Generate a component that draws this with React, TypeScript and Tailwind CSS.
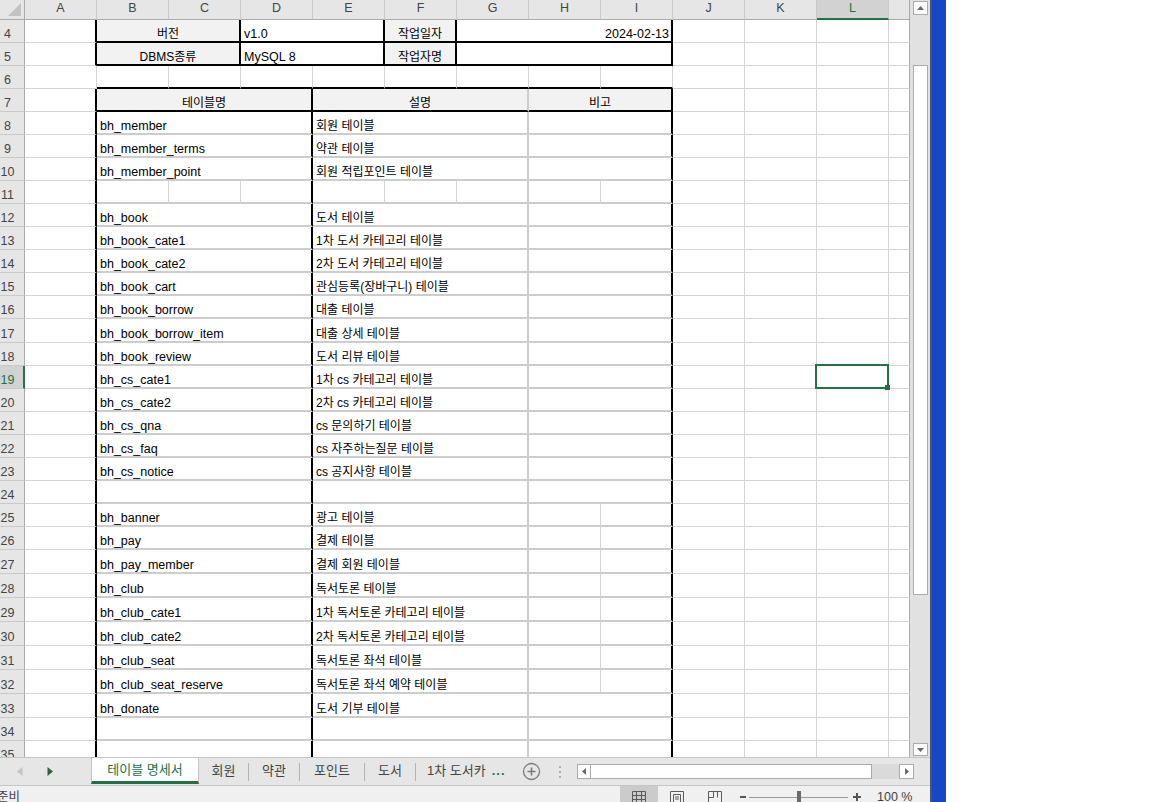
import React from "react";

type Edge = "g" | "k" | "t" | "e";

// right / bottom edge styles of a cell
const RIGHT: Record<Edge, string> = {
  g: "border-r border-r-[#d4d4d4]",
  k: "border-r-2 border-r-black",
  t: "border-r-2 border-r-[#cdcdcd]",
  e: "border-r border-r-[#a8a8a8]",
};
const BOTTOM: Record<Edge, string> = {
  g: "border-b border-b-[#d4d4d4]",
  k: "border-b-2 border-b-black",
  t: "border-b-2 border-b-[#cdcdcd]",
  e: "border-b border-b-[#a8a8a8]",
};
const SPAN = { 1: "col-span-1", 2: "col-span-2", 3: "col-span-3" };
const ALIGN = {
  l: "justify-start pl-[3px]",
  c: "justify-center",
  r: "justify-end pr-[2px]",
};

type Cell = {
  span?: 1 | 2 | 3;
  text?: string;
  align?: "l" | "c" | "r";
  r?: Edge;
  b?: Edge;
  fill?: boolean;
  lat?: boolean;
  sel?: boolean;
};

const COLS = ["A", "B", "C", "D", "E", "F", "G", "H", "I", "J", "K", "L"];

const tail = (sel = false): Cell[] => [{}, {}, { sel }, { r: "e" }];

const BODY: [number, string, string, "m" | "s" | "x"][] = [
  [8, "bh_member", "회원 테이블", "m"],
  [9, "bh_member_terms", "약관 테이블", "m"],
  [10, "bh_member_point", "회원 적립포인트 테이블", "m"],
  [11, "", "", "x"],
  [12, "bh_book", "도서 테이블", "m"],
  [13, "bh_book_cate1", "1차 도서 카테고리 테이블", "m"],
  [14, "bh_book_cate2", "2차 도서 카테고리 테이블", "m"],
  [15, "bh_book_cart", "관심등록(장바구니) 테이블", "m"],
  [16, "bh_book_borrow", "대출 테이블", "m"],
  [17, "bh_book_borrow_item", "대출 상세 테이블", "m"],
  [18, "bh_book_review", "도서 리뷰 테이블", "m"],
  [19, "bh_cs_cate1", "1차 cs 카테고리 테이블", "m"],
  [20, "bh_cs_cate2", "2차 cs 카테고리 테이블", "m"],
  [21, "bh_cs_qna", "cs 문의하기 테이블", "m"],
  [22, "bh_cs_faq", "cs 자주하는질문 테이블", "m"],
  [23, "bh_cs_notice", "cs 공지사항 테이블", "m"],
  [24, "", "", "m"],
  [25, "bh_banner", "광고 테이블", "s"],
  [26, "bh_pay", "결제 테이블", "s"],
  [27, "bh_pay_member", "결제 회원 테이블", "s"],
  [28, "bh_club", "독서토론 테이블", "s"],
  [29, "bh_club_cate1", "1차 독서토론 카테고리 테이블", "s"],
  [30, "bh_club_cate2", "2차 독서토론 카테고리 테이블", "s"],
  [31, "bh_club_seat", "독서토론 좌석 테이블", "s"],
  [32, "bh_club_seat_reserve", "독서토론 좌석 예약 테이블", "s"],
  [33, "bh_donate", "도서 기부 테이블", "m"],
  [34, "", "", "m"],
  [35, "", "", "m"],
];

const TALL = [17, 27, 28, 29, 30, 31, 32, 33];

function bodyCells(n: number, name: string, desc: string, kind: "m" | "s" | "x"): Cell[] {
  if (kind === "x") {
    return [
      { r: "k" },
      { b: "t" },
      { b: "t" },
      { r: "k", b: "t" },
      { b: "t" },
      { b: "t" },
      { r: "t", b: "t" },
      { b: "t" },
      { r: "k", b: "t" },
      ...tail(),
    ];
  }
  const hi: Cell[] = kind === "s" ? [{ b: "t" }, { r: "k", b: "t" }] : [{ span: 2, r: "k", b: "t" }];
  return [
    { r: "k" },
    { span: 3, text: name, lat: true, r: "k", b: "t" },
    { span: 3, text: desc, r: "t", b: "t" },
    ...hi,
    ...tail(n === 19),
  ];
}

const TOP_ROWS: [number, Cell[]][] = [
  [
    4,
    [
      { r: "k" },
      { span: 2, text: "버전", align: "c", r: "k", b: "k", fill: true },
      { span: 2, text: "v1.0", lat: true, r: "k", b: "k" },
      { text: "작업일자", align: "c", r: "k", b: "k", fill: true },
      { span: 3, text: "2024-02-13", align: "r", lat: true, r: "k", b: "k" },
      ...tail(),
    ],
  ],
  [
    5,
    [
      { r: "k" },
      { span: 2, text: "DBMS종류", align: "c", r: "k", b: "k", fill: true },
      { span: 2, text: "MySQL 8", lat: true, r: "k", b: "k" },
      { text: "작업자명", align: "c", r: "k", b: "k", fill: true },
      { span: 3, r: "k", b: "k" },
      ...tail(),
    ],
  ],
  [6, [{}, { b: "k" }, { b: "k" }, { b: "k" }, { b: "k" }, { b: "k" }, { b: "k" }, { b: "k" }, { b: "k" }, ...tail()]],
  [
    7,
    [
      { r: "k" },
      { span: 3, text: "테이블명", align: "c", r: "k", b: "k", fill: true },
      { span: 3, text: "설명", align: "c", r: "t", b: "k", fill: true },
      { span: 2, text: "비고", align: "c", r: "k", b: "k", fill: true },
      ...tail(),
    ],
  ],
];

function SheetCell({ c }: { c: Cell }) {
  const cls = [
    "flex min-w-0 items-end whitespace-nowrap pb-[1px] leading-[12px] text-black",
    SPAN[c.span ?? 1],
    RIGHT[c.r ?? "g"],
    BOTTOM[c.b ?? "g"],
    ALIGN[c.align ?? "l"],
    c.fill ? "bg-[#f2f2f2]" : "bg-white",
    c.lat ? "text-[12.5px]" : "text-[12px]",
    c.sel ? "relative" : "",
  ].join(" ");
  return (
    <div className={cls}>
      {c.text}
      {c.sel && (
        <>
          <div className="absolute -top-[2px] -left-[2px] -right-[1px] -bottom-[1px] z-10 border-2 border-[#217346]" />
          <div className="absolute -right-[2px] -bottom-[2px] z-20 h-[5px] w-[5px] bg-[#217346]" />
        </>
      )}
    </div>
  );
}

function SheetRow({ n, cells }: { n: number; cells: Cell[] }) {
  const h = TALL.includes(n) ? "h-[24px]" : "h-[23px]";
  const sel = n === 19;
  return (
    <div className={`grid shrink-0 grid-cols-[25px_repeat(12,72px)_21px] ${h}`}>
      <div
        className={`flex items-end border-b border-b-[#c9c9c9] pb-[2px] leading-[12px] ${
          sel
            ? "border-r-2 border-r-[#217346] bg-[#d2d2d2] text-[#217346]"
            : "border-r border-r-[#ababab] bg-[#e6e6e6] text-[#444]"
        }`}
      >
        <span className="w-[15px] text-center text-[12.5px]">{n}</span>
      </div>
      {cells.map((c, i) => (
        <SheetCell key={i} c={c} />
      ))}
    </div>
  );
}

function HeaderRow() {
  return (
    <div className="grid h-[20px] shrink-0 grid-cols-[25px_repeat(12,72px)_21px] bg-[#e6e6e6] text-[12.5px] leading-[14px] text-[#444]">
      <div className="flex items-end justify-end border-r border-b border-r-[#ababab] border-b-[#ababab] pr-[2px] pb-[2px]">
        <svg width="16" height="15" viewBox="0 0 16 15">
          <path d="M15 1 L15 14 L2 14 Z" fill="#c2c2c2" />
        </svg>
      </div>
      {COLS.map((c) => (
        <div
          key={c}
          className={`flex justify-center border-r border-r-[#c9c9c9] pt-[1px] ${
            c === "L"
              ? "border-b-2 border-b-[#217346] bg-[#d2d2d2] text-[#217346]"
              : "border-b border-b-[#ababab]"
          }`}
        >
          {c}
        </div>
      ))}
      <div className="border-r border-b border-r-[#a8a8a8] border-b-[#ababab]" />
    </div>
  );
}

function VScroll() {
  return (
    <div className="flex w-[20px] flex-col bg-[#e1e1e1] pl-[3px] pr-[2px]">
      <div className="mt-[1px] flex h-[14px] items-center justify-center border border-[#ababab] bg-white">
        <svg width="7" height="4" viewBox="0 0 7 4">
          <path d="M0 4 L3.5 0 L7 4 Z" fill="#6a6a6a" />
        </svg>
      </div>
      <div className="mt-[50px] h-[530px] border border-[#ababab] bg-white" />
      <div className="mt-auto mb-[1px] flex h-[13px] items-center justify-center border border-[#ababab] bg-white">
        <svg width="7" height="4" viewBox="0 0 7 4">
          <path d="M0 0 L7 0 L3.5 4 Z" fill="#6a6a6a" />
        </svg>
      </div>
    </div>
  );
}

const TABS: [string, string][] = [
  ["회원", "w-[49px]"],
  ["약관", "w-[50px]"],
  ["포인트", "w-[64px]"],
  ["도서", "w-[50px]"],
];

function TabBar() {
  return (
    <div className="flex h-[29px] shrink-0 border-t border-b border-t-[#c6c6c6] border-b-[#c6c6c6] bg-[#e6e6e6] text-[13px] text-[#444]">
      <div className="flex w-[91px] items-center pl-[17px]">
        <svg width="6" height="9" viewBox="0 0 6 9">
          <path d="M5.5 0 L0 4.5 L5.5 9 Z" fill="#c4c4c4" />
        </svg>
        <svg className="ml-[24px]" width="6" height="9" viewBox="0 0 6 9">
          <path d="M0.5 0 L6 4.5 L0.5 9 Z" fill="#1e6b43" />
        </svg>
      </div>
      <div className="flex h-[26px] w-[108px] items-center justify-center border-x border-b-[3px] border-x-[#c6c6c6] border-b-[#217346] bg-white pt-[1px] text-[#217346]">
        테이블 명세서
      </div>
      {TABS.map(([t, w]) => (
        <div key={t} className="flex items-center">
          <div className={`flex h-full items-center justify-center pb-[2px] ${w}`}>{t}</div>
          <div className="h-[18px] w-px bg-[#b4b4b4]" />
        </div>
      ))}
      <div className="flex w-[98px] items-center pb-[2px] pl-[11px]">
        1차 도서카
        <span className="ml-[6px] font-bold tracking-[1px] text-[#217346]">...</span>
      </div>
      <div className="flex w-[34px] items-center justify-center">
        <svg width="19" height="19" viewBox="0 0 19 19">
          <circle cx="9.5" cy="9.5" r="8" fill="none" stroke="#7a7a7a" strokeWidth="1.3" />
          <path d="M9.5 5.5 V13.5 M5.5 9.5 H13.5" stroke="#7a7a7a" strokeWidth="1.6" />
        </svg>
      </div>
      <div className="flex w-[24px] flex-col items-center justify-center gap-[3px]">
        <div className="h-[2px] w-[2px] bg-[#b0b0b0]" />
        <div className="h-[2px] w-[2px] bg-[#b0b0b0]" />
        <div className="h-[2px] w-[2px] bg-[#b0b0b0]" />
      </div>
      <div className="ml-[5px] flex w-[337px] items-center">
        <div className="flex h-[15px] w-full">
          <div className="flex w-[14px] items-center justify-center border border-[#ababab] bg-white">
            <svg width="4" height="7" viewBox="0 0 4 7">
              <path d="M4 0 L0 3.5 L4 7 Z" fill="#6a6a6a" />
            </svg>
          </div>
          <div className="w-[281px] border-y border-r border-[#ababab] bg-white" />
          <div className="flex-1 bg-[#dadada]" />
          <div className="flex w-[15px] items-center justify-center border border-[#ababab] bg-white">
            <svg width="4" height="7" viewBox="0 0 4 7">
              <path d="M0 0 L4 3.5 L0 7 Z" fill="#6a6a6a" />
            </svg>
          </div>
        </div>
      </div>
    </div>
  );
}

function StatusBar() {
  return (
    <div className="flex h-[22px] shrink-0 items-center bg-[#f0f0f0] text-[12.5px] text-[#444]">
      <span className="-ml-[3px] w-[623px]">준비</span>
      <div className="flex h-full w-[38px] items-center justify-center bg-[#cbcbcb]">
        <svg width="14" height="13" viewBox="0 0 14 13">
          <path
            d="M0.5 0.5 H13.5 V12.5 H0.5 Z M0.5 4.5 H13.5 M0.5 8.5 H13.5 M4.5 0.5 V12.5 M9.5 0.5 V12.5"
            fill="none"
            stroke="#5a5a5a"
          />
        </svg>
      </div>
      <div className="flex h-full w-[38px] items-center justify-center">
        <svg width="14" height="13" viewBox="0 0 14 13">
          <path d="M0.5 0.5 H13.5 V12.5 H0.5 Z M3.5 3.5 H10.5 V12.5 M3.5 3.5 V12.5 M5 6 H9 M5 8 H9" fill="none" stroke="#5a5a5a" />
        </svg>
      </div>
      <div className="flex h-full w-[38px] items-center justify-center">
        <svg width="14" height="13" viewBox="0 0 14 13">
          <path d="M0.5 0.5 H13.5 V12.5 H0.5 Z M5.5 0.5 V6.5 H0.5 M9.5 0.5 V6.5" fill="none" stroke="#5a5a5a" />
        </svg>
      </div>
      <div className="ml-[6px] h-[2px] w-[6px] bg-[#555]" />
      <div className="relative ml-[3px] h-px w-[99px] bg-[#9a9a9a]">
        <div className="absolute -top-[6px] left-[48px] h-[13px] w-[4px] bg-[#6a6a6a]" />
      </div>
      <svg className="ml-[5px]" width="8" height="8" viewBox="0 0 8 8">
        <path d="M4 0 V8 M0 4 H8" stroke="#555" strokeWidth="2" />
      </svg>
      <span className="ml-[16px]">100 %</span>
    </div>
  );
}

export default function App() {
  return (
    <div className="flex h-[802px] w-[1152px] overflow-hidden bg-white font-['Liberation_Sans','Noto_Sans_CJK_KR',sans-serif]">
      <div className="flex w-[930px] shrink-0 flex-col bg-[#e6e6e6]">
        <div className="flex h-[757px] shrink-0">
          <div className="flex w-[910px] flex-col overflow-hidden bg-white">
            <HeaderRow />
            {TOP_ROWS.map(([n, cells]) => (
              <SheetRow key={n} n={n} cells={cells} />
            ))}
            {BODY.map(([n, name, desc, kind]) => (
              <SheetRow key={n} n={n} cells={bodyCells(n, name, desc, kind)} />
            ))}
          </div>
          <VScroll />
        </div>
        <TabBar />
        <StatusBar />
      </div>
      <div className="w-[2px] shrink-0 bg-[#4a5560]" />
      <div className="w-[14px] shrink-0 bg-[#1747c4]" />
      <div className="flex-1 bg-white" />
    </div>
  );
}
